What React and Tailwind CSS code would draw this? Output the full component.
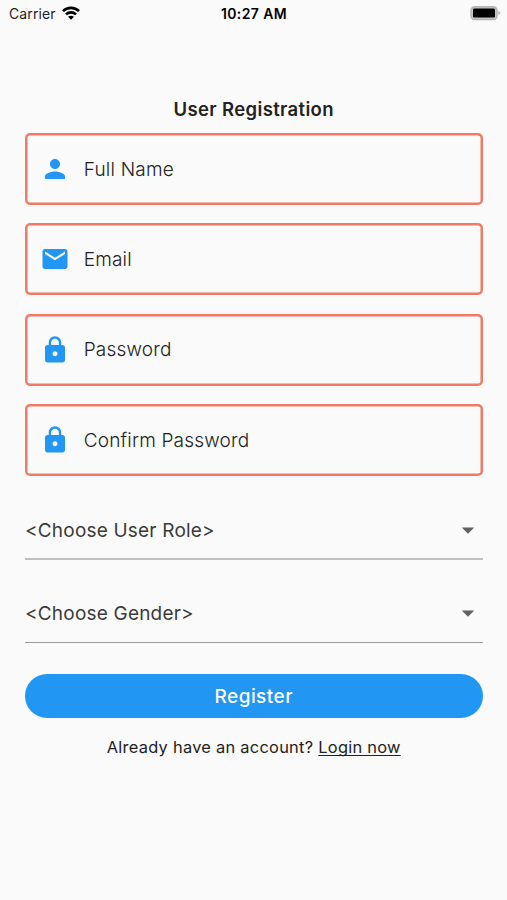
/**
 * Registration screen: status bar, text fields, two dropdowns and the submit button.
 */
import { MdPerson, MdEmail, MdLock, MdArrowDropDown } from 'react-icons/md'

const FIELDS = [
  { id: 'name', label: 'Full Name', Icon: MdPerson },
  { id: 'email', label: 'Email', Icon: MdEmail },
  { id: 'password', label: 'Password', Icon: MdLock },
  { id: 'confirm', label: 'Confirm Password', Icon: MdLock },
]

function WifiIcon() {
  return (
    <svg className="mb-[1px] w-[18px] h-[14px]" viewBox="0 0 18 14" fill="none" stroke="black" strokeWidth="2.7">
      <path d="M1 5.1C5.5 0.7 12.5 0.7 17 5.1" />
      <path d="M4 8.4C6.8 5.7 11.2 5.7 14 8.4" />
      <path d="M9 13.8L6.1 10.8C7.8 9.4 10.2 9.4 11.9 10.8Z" fill="black" stroke="none" />
    </svg>
  )
}

function BatteryIcon() {
  return (
    <svg className="w-[31px] h-[15px]" viewBox="0 0 31 15">
      <rect x="1" y="0.7" width="26" height="12.8" rx="3.6" fill="#c4c4c4" stroke="#b4b4b4" strokeWidth="1.4" />
      <rect x="3" y="2.6" width="22" height="9" rx="1.4" fill="black" />
      <path d="M28.4 4.7L30.8 7L28.4 9.3Z" fill="#b4b4b4" />
    </svg>
  )
}

function StatusBar() {
  return (
    <div className="grid grid-cols-3 items-center h-[27px] pl-[9px] pr-[6px] text-[14px] text-black">
      <div className="flex items-center gap-[6px]">
        <span className="text-[#222] tracking-[0.1px]">Carrier</span>
        <WifiIcon />
      </div>
      <span className="pr-[2px] text-center font-semibold tracking-[0.4px] whitespace-nowrap">10:27 AM</span>
      <div className="flex justify-end">
        <BatteryIcon />
      </div>
    </div>
  )
}

function Field({ label, Icon }) {
  return (
    <label className="flex items-center h-[72px] rounded-[5px] shadow-[inset_0_0_0_2.5px_#ee7b66] pl-[14.5px]">
      <Icon className="w-[30px] h-[30px] shrink-0 text-[#2196f3]" />
      <span className="ml-[14.2px] pt-[1.6px] text-[19px] font-light text-[#222] tracking-[0.2px]">{label}</span>
    </label>
  )
}

function Dropdown({ label, line }) {
  return (
    <div className={`flex items-center justify-between h-[59px] ${line}`}>
      <span className="pt-[3px] text-[19px] text-[#3a3a3a] tracking-[0.2px]">{label}</span>
      <MdArrowDropDown className="w-[30px] h-[30px] text-[#616161]" />
    </div>
  )
}

export default function App() {
  return (
    <div className="h-[900px] w-[507px] overflow-hidden bg-[#fafafa] font-['Inter',sans-serif]">
      <StatusBar />

      <main className="flex flex-col pl-[25px] pr-[24.5px] pt-[69px]">
        <h1 className="h-[37px] pt-[1px] text-center text-[18.5px] leading-[24px] font-semibold text-[#222] tracking-[0.35px]">
          User Registration
        </h1>

        <div className="flex flex-col gap-[18.4px]">
          {FIELDS.map((f) => (
            <Field key={f.id} label={f.label} Icon={f.Icon} />
          ))}
        </div>

        <div className="flex flex-col gap-[24px] mt-[24.8px]">
          <Dropdown label="<Choose User Role>" line="pt-[1px] border-b-2 border-[#c0c0c0]" />
          <Dropdown label="<Choose Gender>" line="border-b border-[#9c9c9c]" />
        </div>

        <button className="mt-[31px] h-[44px] pt-[3px] rounded-full bg-[#2196f3] text-[19px] font-medium text-white tracking-[0.45px]">
          Register
        </button>

        <p className="mt-[17px] text-center text-[16.4px] leading-[24px] text-[#222] tracking-[0.27px]">
          Already have an account?{' '}
          <a className="underline underline-offset-2 [text-decoration-skip-ink:none]">Login now</a>
        </p>
      </main>
    </div>
  )
}
